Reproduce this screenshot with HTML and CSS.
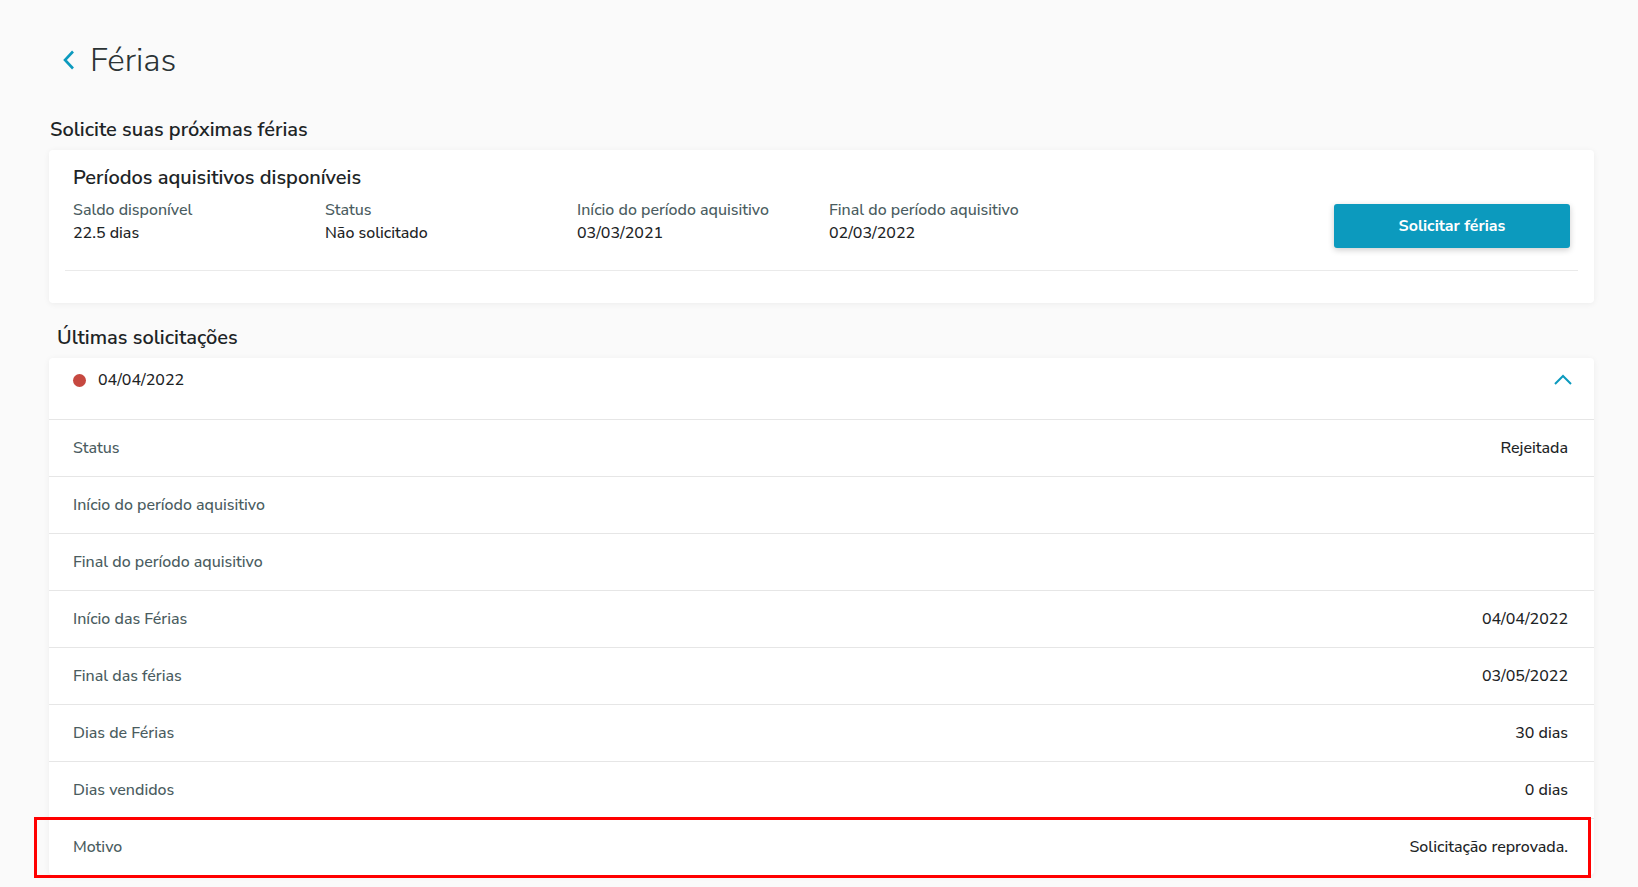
FILE: index.html
```html
<!DOCTYPE html>
<html lang="pt-BR">
<head>
    <meta charset="UTF-8">
    <meta name="viewport" content="width=device-width, initial-scale=1.0">
    <title>Férias</title>
    <link rel="stylesheet" href="styles.css">
</head>
<body>
    <header class="page-header">
        <a class="back" href="#">
            <svg width="14" height="20" viewBox="0 0 14 20"><path d="M11 1.5 L3 10 L11 18.5" fill="none" stroke="#0c9abe" stroke-width="2.6"/></svg>
        </a>
        <h1>Férias</h1>
    </header>

    <div class="content">
        <h2 class="section-title">Solicite suas próximas férias</h2>
        <div class="card periodos">
            <div class="periodos-inner">
                <h3>Períodos aquisitivos disponíveis</h3>
                <div class="periodos-row">
                    <div class="info">
                        <p class="info-label">Saldo disponível</p>
                        <p class="info-value">22.5 dias</p>
                    </div>
                    <div class="info">
                        <p class="info-label">Status</p>
                        <p class="info-value">Não solicitado</p>
                    </div>
                    <div class="info">
                        <p class="info-label">Início do período aquisitivo</p>
                        <p class="info-value">03/03/2021</p>
                    </div>
                    <div class="info">
                        <p class="info-label">Final do período aquisitivo</p>
                        <p class="info-value">02/03/2022</p>
                    </div>
                    <button class="btn-primary">Solicitar férias</button>
                </div>
            </div>
            <hr class="divider">
        </div>

        <h2 class="section-title ultimas">Últimas solicitações</h2>
        <div class="card solicitacao">
            <div class="solicitacao-header">
                <span class="dot"></span>
                <span class="data">04/04/2022</span>
                <svg class="chevron" width="18" height="12" viewBox="0 0 18 12"><path d="M1 10 L9 2 L17 10" fill="none" stroke="#0c9abe" stroke-width="2"/></svg>
            </div>
            <div class="linha"><span>Status</span><span class="valor">Rejeitada</span></div>
            <div class="linha"><span>Início do período aquisitivo</span><span class="valor"></span></div>
            <div class="linha"><span>Final do período aquisitivo</span><span class="valor"></span></div>
            <div class="linha"><span>Início das Férias</span><span class="valor">04/04/2022</span></div>
            <div class="linha"><span>Final das férias</span><span class="valor">03/05/2022</span></div>
            <div class="linha"><span>Dias de Férias</span><span class="valor">30 dias</span></div>
            <div class="linha"><span>Dias vendidos</span><span class="valor">0 dias</span></div>
            <div class="linha"><span>Motivo</span><span class="valor">Solicitação reprovada.</span></div>
        </div>
    </div>

    <div class="destaque"></div>
</body>
</html>
```

FILE: styles.css
```css
body {
    font-family: "Nunito Sans", Lato, "Open Sans", sans-serif;
    margin: 0;
    padding: 0;
    background-color: #fafafa;
    color: #1d2426;
    height: 887px;
    overflow: hidden;
}
.page-header {
    display: flex;
    align-items: center;
    gap: 14px;
    padding: 40px 0 0 62px;
    height: 40px;
}
.back {
    display: flex;
    align-items: center;
}
.page-header h1 {
    margin: 0;
    font-size: 33px;
    font-weight: 300;
    color: #2b3335;
}
.content {
    padding: 0 44px 0 44px;
}
.section-title {
    margin: 0;
    font-size: 20px;
    font-weight: 600;
    line-height: 28px;
    padding: 36px 0 6px 6px;
}
.section-title.ultimas {
    padding: 21px 0 6px 13px;
}
.card {
    margin-left: 5px;
    background-color: #fff;
    border-radius: 4px;
    box-shadow: 0 1px 6px rgba(0, 0, 0, 0.06);
}
.periodos {
    padding: 15px 16px 32px 16px;
}
.periodos-inner {
    padding: 0 8px;
}
.periodos h3 {
    margin: 0;
    font-size: 20px;
    font-weight: 600;
    line-height: 26px;
}
.periodos-row {
    display: flex;
    align-items: center;
    margin-top: 5px;
}
.info {
    width: 252px;
}
.info-label {
    margin: 0;
    font-size: 16px;
    font-weight: 500;
    line-height: 24px;
    color: #4a5c60;
}
.info-value {
    margin: 0;
    font-size: 16px;
    font-weight: 500;
    line-height: 23px;
}
.btn-primary {
    margin: 8px 0 -2px auto;
    width: 236px;
    height: 44px;
    border: none;
    border-radius: 3px;
    background-color: #0c9abe;
    color: #fff;
    font-family: inherit;
    font-size: 16px;
    font-weight: 700;
    box-shadow: 0 2px 6px rgba(0, 0, 0, 0.2);
    cursor: pointer;
}
.divider {
    margin: 24px 0 0 0;
    border: none;
    border-top: 1px solid #eaeaea;
}
.solicitacao {
    overflow: hidden;
}
.solicitacao-header {
    display: flex;
    align-items: center;
    height: 44px;
    padding: 0 22px 17px 24px;
    border-bottom: 1px solid #e6e6e6;
}
.dot {
    width: 13px;
    height: 13px;
    border-radius: 50%;
    background-color: #c64840;
}
.data {
    margin-left: 12px;
    font-size: 16px;
    font-weight: 500;
}
.chevron {
    margin-left: auto;
}
.linha {
    display: flex;
    justify-content: space-between;
    align-items: center;
    height: 56px;
    padding: 0 26px 0 24px;
    border-bottom: 1px solid #e6e6e6;
    font-size: 16px;
    font-weight: 500;
    color: #4a5c60;
}
.linha:last-child {
    border-bottom: none;
}
.linha .valor {
    color: #1d2426;
}
.destaque {
    position: absolute;
    left: 34px;
    top: 817px;
    width: 1551px;
    height: 55px;
    border: 3px solid #ff0000;
}
```
